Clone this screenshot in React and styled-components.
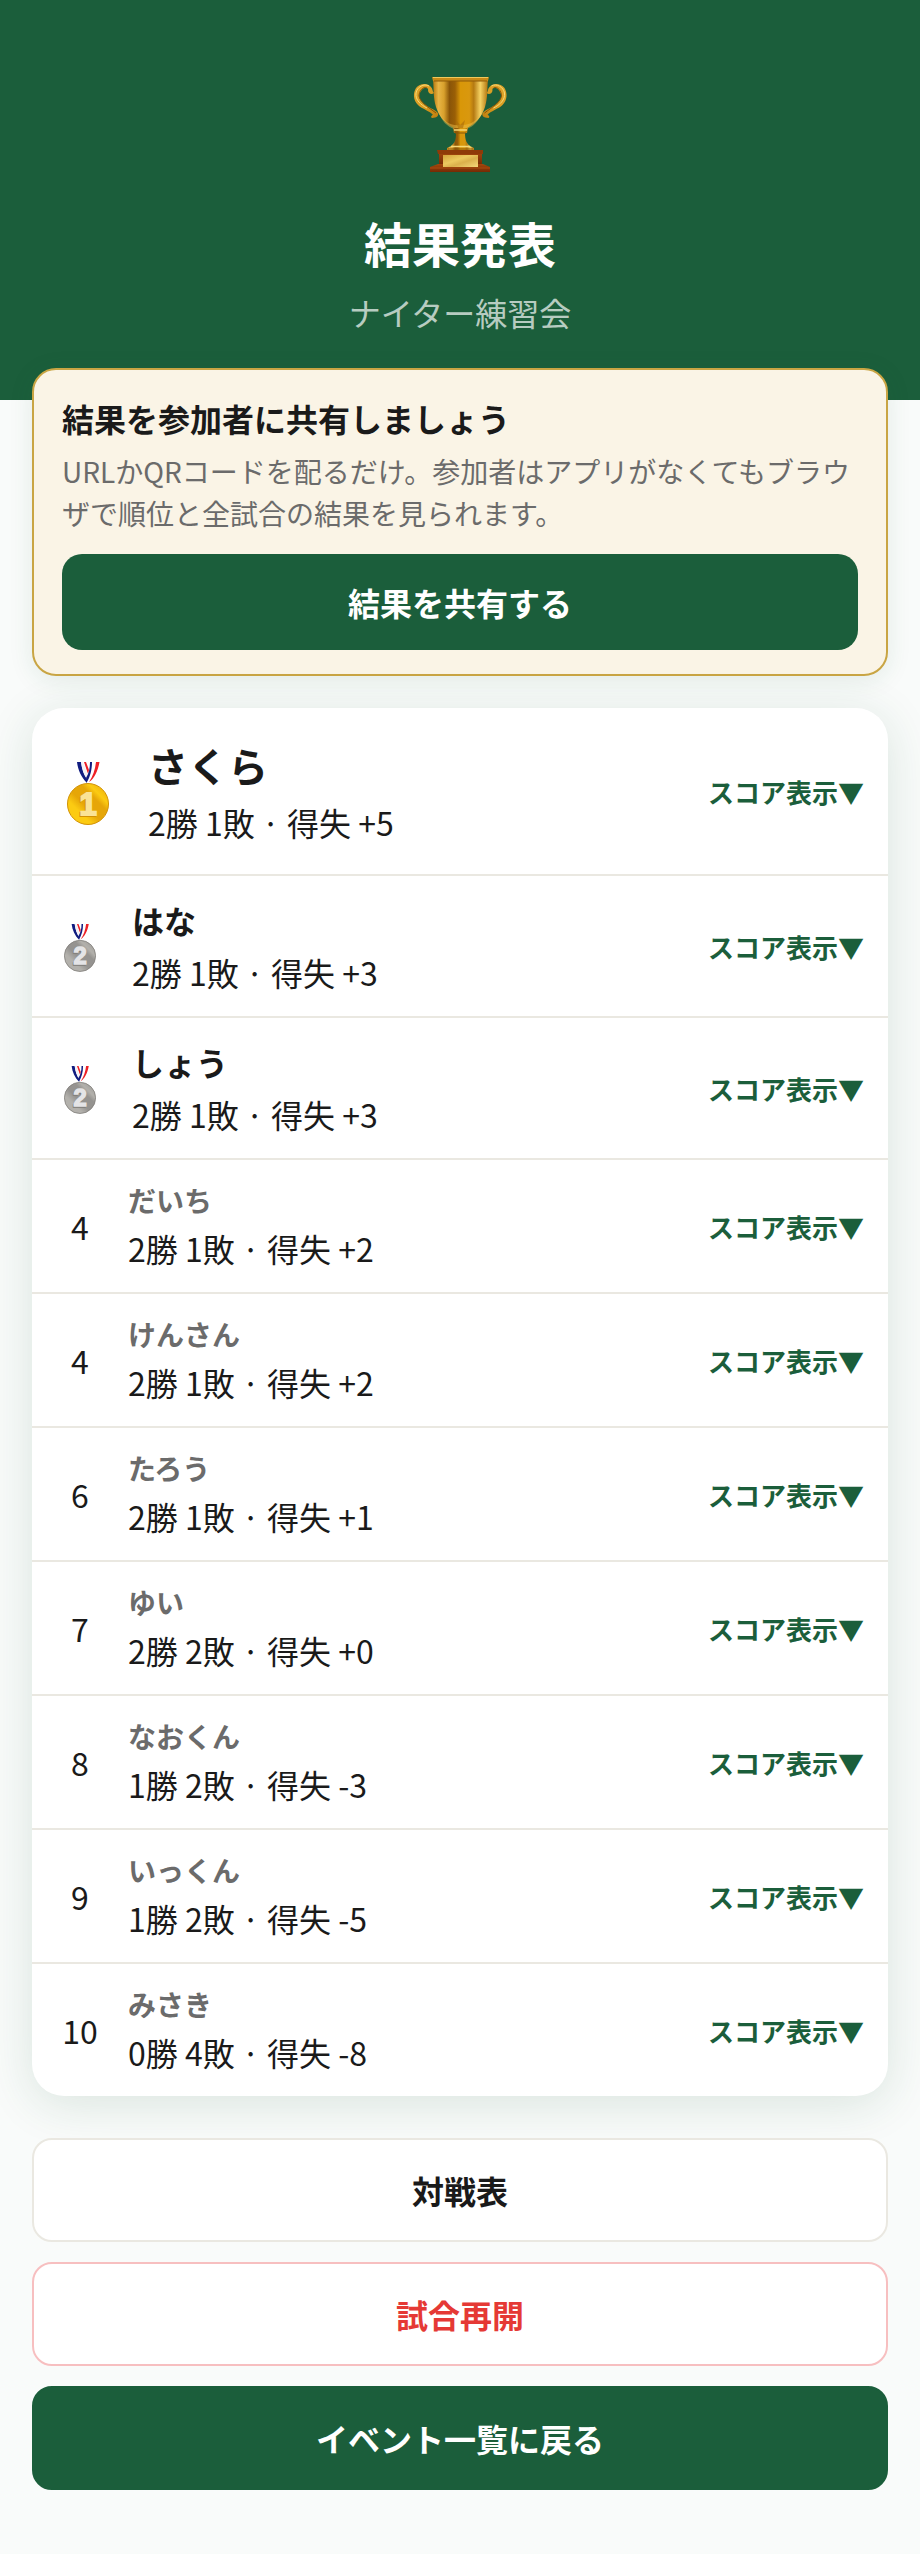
import React from "react"
import styled, { createGlobalStyle, css } from "styled-components"

const colors = {
  green: "#1b5e3b",
  gold: "#c9a544",
  cream: "#faf4e6",
  text: "#1a1a1a",
  muted: "#6b6b6b",
  line: "#eae8e1",
  red: "#e53935",
}

const players = [
  { rank: 1, name: "さくら", win: 2, lose: 1, diff: "+5" },
  { rank: 2, name: "はな", win: 2, lose: 1, diff: "+3" },
  { rank: 2, name: "しょう", win: 2, lose: 1, diff: "+3" },
  { rank: 4, name: "だいち", win: 2, lose: 1, diff: "+2" },
  { rank: 4, name: "けんさん", win: 2, lose: 1, diff: "+2" },
  { rank: 6, name: "たろう", win: 2, lose: 1, diff: "+1" },
  { rank: 7, name: "ゆい", win: 2, lose: 2, diff: "+0" },
  { rank: 8, name: "なおくん", win: 1, lose: 2, diff: "-3" },
  { rank: 9, name: "いっくん", win: 1, lose: 2, diff: "-5" },
  { rank: 10, name: "みさき", win: 0, lose: 4, diff: "-8" },
]

const Trophy = () => (
  <TrophyIcon viewBox="0 0 96 96" aria-hidden="true">
    <defs>
      <linearGradient id="cup" x1="0" x2="1" y1="0" y2="0">
        <stop offset="0" stopColor="#b8780f" />
        <stop offset="0.1" stopColor="#e8b545" />
        <stop offset="0.2" stopColor="#d8a02c" />
        <stop offset="0.3" stopColor="#8a5508" />
        <stop offset="0.4" stopColor="#9a5f06" />
        <stop offset="0.5" stopColor="#d99708" />
        <stop offset="0.66" stopColor="#d9980f" />
        <stop offset="0.74" stopColor="#b57a12" />
        <stop offset="0.86" stopColor="#f5d263" />
        <stop offset="1" stopColor="#b0720c" />
      </linearGradient>
      <linearGradient id="handle" x1="0" x2="1" y1="0" y2="1">
        <stop offset="0" stopColor="#e0a62c" />
        <stop offset="0.5" stopColor="#d99d22" />
        <stop offset="1" stopColor="#c0800f" />
      </linearGradient>
      <linearGradient id="wood" x1="0" x2="0" y1="0" y2="1">
        <stop offset="0" stopColor="#a4470c" />
        <stop offset="1" stopColor="#742a04" />
      </linearGradient>
      <linearGradient id="plaque" x1="0" x2="1" y1="0" y2="1">
        <stop offset="0" stopColor="#d4a23a" />
        <stop offset="0.4" stopColor="#ecc95f" />
        <stop offset="0.6" stopColor="#dbb04c" />
        <stop offset="1" stopColor="#f3d77a" />
      </linearGradient>
      <g id="arm">
        <path
          d="M22 17 C20 19 16 18 16 14 C17 12 12 10 9 15 C6 19 7 23 10 26 C13 30 20 32 25 36 C28 39 25 42 20 42 C18 41 20 39 21 39 C18 35 10 33 6 29 C1 24 1 17 4 12 C8 7 16 7 19 11 C21 13 20 15 22 17 Z"
          fill="url(#handle)"
        />
        <path
          d="M17 10 C12 7 5 11 4 17 C3 24 9 29 15 32"
          fill="none"
          stroke="#f7d976"
          strokeWidth="1"
        />
        <path
          d="M15 12 C11 10 7 15 7 20 C8 26 16 31 24 37"
          fill="none"
          stroke="#8a5406"
          strokeWidth="1"
        />
      </g>
    </defs>
    <use href="#arm" />
    <use href="#arm" transform="translate(96.500 0) scale(-1 1)" />
    <path
      d="M21 4 C22 12 21 21 24 31 C27 41 34 48 42 52 L55 52 C63 48 70 41 73 31 C76 21 75 12 76 4 Z"
      fill="url(#cup)"
    />
    <path
      d="M27 36 C31 45 38 50 48 49 C58 50 66 44 70 36 C67 46 60 51 55 53 L42 53 C36 51 29 45 27 36 Z"
      fill="#f0c44e"
      opacity="0.45"
    />
    <path d="M44 44 L48 49 L53 44 L51 52 L46 52 Z" fill="#a86d0c" opacity="0.6" />
    <path d="M20 1 H77 L76 5 H21 Z" fill="#c88a17" />
    <path d="M21 1.500 H76" stroke="#f0c95c" strokeWidth="1" />
    <path d="M22 5 H75" stroke="#8f5a08" strokeWidth="1" />
    <path
      d="M41 52 H56 L55 57 H53 C53 64 55 68 58 70 L62 72 V75 H35 V72 L39 70 C43 67 44 63 44 57 H42 Z"
      fill="url(#cup)"
    />
    <path d="M42 54 H55 M39 70.500 H58" stroke="#f7d876" strokeWidth="1.500" />
    <path d="M43 57 H54 M36 73 H61" stroke="#8a5606" strokeWidth="1" />
    <path d="M27 76 H70 V89 H27 Z" fill="url(#wood)" />
    <path d="M25 74 H71 V78 H26 Z" fill="#8f3a08" />
    <path d="M26 88 H71 L78 91 V96 H18 V91 Z" fill="url(#wood)" />
    <path d="M18 92 H78" stroke="#a84c10" strokeWidth="1" />
    <rect x="31" y="79" width="35" height="12" fill="url(#plaque)" />
  </TrophyIcon>
)

const medalColors = {
  1: ["#fccb12", "#e6a608", "#d29205", "#fae396"],
  2: ["#b3b1ac", "#959390", "#7f7d79", "#e4e4e6"],
}

const Medal = ({ place }) => {
  const [light, mid, edge, digit] = medalColors[place]
  return (
    <MedalIcon viewBox="0 0 42 68" $place={place} role="img" aria-label={`${place}位`}>
      <defs>
        <linearGradient id={`medal${place}`} x1="0" x2="1" y1="1" y2="0">
          <stop offset="0" stopColor={light} />
          <stop offset="0.3" stopColor={light} />
          <stop offset="0.45" stopColor={mid} />
          <stop offset="0.65" stopColor={mid} />
          <stop offset="0.75" stopColor={light} />
          <stop offset="1" stopColor={mid} />
        </linearGradient>
      </defs>
      <path d="M26 5 H32 C30 14 27 21 22 25 H20 C24 19 25 13 26 5 Z" fill="#fff" />
      <path d="M29 5 H32.500 C31 14 27 22 22 25 C26 19 28 13 29 5 Z" fill="#ee2025" />
      <path d="M17 5 H19 L22 13 L21 17 Z" fill="#ee2025" />
      <path d="M10 5 H14 C15 13 17 18 20 22 V26 C14 20 11 13 10 5 Z" fill="#101c80" />
      <path d="M14 5 H16 L21 18 L20 22 C17 18 15 12 14 5 Z" fill="#f4f2f8" />
      <path d="M23 5 H25 C25 13 23 20 20 25 L19 21 C22 16 23 11 23 5 Z" fill="#101c80" />
      <circle cx="21" cy="47" r="20.500" fill={`url(#medal${place})`} stroke={edge} />
      <MedalDigit x="20" y="59" fill={edge} stroke={edge} aria-hidden="true">
        {place}
      </MedalDigit>
      <MedalDigit x="21" y="58" fill={digit} stroke={digit}>
        {place}
      </MedalDigit>
    </MedalIcon>
  )
}

const PlayerRow = ({ player }) => {
  const { rank, name, win, lose, diff } = player
  return (
    <Row $rank={rank}>
      <Rank $rank={rank}>{rank < 3 ? <Medal place={rank} /> : rank}</Rank>
      <PlayerInfo>
        <PlayerName $rank={rank}>{name}</PlayerName>
        <Stats>
          {win}勝 {lose}敗 · 得失 {diff}
        </Stats>
      </PlayerInfo>
      <ScoreToggle type="button" aria-expanded="false">
        スコア表示▼
      </ScoreToggle>
    </Row>
  )
}

const App = () => {
  return (
    <>
      <GlobalStyle />
      <Hero>
        <Trophy />
        <Title>結果発表</Title>
        <EventName>ナイター練習会</EventName>
      </Hero>
      <Content>
        <ShareCard>
          <ShareTitle>結果を参加者に共有しましょう</ShareTitle>
          <ShareText>
            URLかQRコードを配るだけ。参加者はアプリがなくてもブラウザで順位と全試合の結果を見られます。
          </ShareText>
          <ShareButton type="button">結果を共有する</ShareButton>
        </ShareCard>
        <Ranking>
          {players.map((player) => (
            <PlayerRow key={player.name} player={player} />
          ))}
        </Ranking>
        <Actions>
          <ActionButton type="button">対戦表</ActionButton>
          <ActionButton type="button" $variant="danger">
            試合再開
          </ActionButton>
          <ActionButton type="button" $variant="primary">
            イベント一覧に戻る
          </ActionButton>
        </Actions>
      </Content>
    </>
  )
}

export default App

const GlobalStyle = createGlobalStyle`
  * {
    box-sizing: border-box;
  }

  body {
    margin: 0;
    background: #f9fbfa;
    color: ${colors.text};
    font-family: "Noto Sans CJK JP", sans-serif;
    font-size: 32px;
    line-height: 48px;
  }

  h1, h2, p, ol {
    margin: 0;
    padding: 0;
  }

  button {
    font-family: inherit;
    font-weight: 700;
    cursor: pointer;
  }
`

const Hero = styled.header`
  display: flex;
  flex-direction: column;
  align-items: center;
  padding: 76px 32px 64px;
  background: ${colors.green};
`

const TrophyIcon = styled.svg`
  width: 96px;
  height: 96px;
`

const Title = styled.h1`
  margin-top: 36px;
  font-size: 48px;
  line-height: 68px;
  color: #fff;
`

const EventName = styled.p`
  margin-top: 12px;
  color: rgba(255, 255, 255, 0.7);
`

const Content = styled.main`
  margin-top: -32px;
  padding: 0 32px 64px;
`

const ShareCard = styled.section`
  padding: 24px 28px;
  border: 2px solid ${colors.gold};
  border-radius: 24px;
  background: ${colors.cream};
  box-shadow: 0 4px 24px rgba(27, 94, 59, 0.1);
`

const ShareTitle = styled.h2`
  font-size: 32px;
`

const ShareText = styled.p`
  margin-top: 8px;
  font-size: 28px;
  line-height: 42px;
  color: ${colors.muted};
`

const ShareButton = styled.button`
  width: 100%;
  height: 96px;
  margin-top: 20px;
  border: none;
  border-radius: 20px;
  background: ${colors.green};
  color: #fff;
  font-size: 32px;
`

const Ranking = styled.ol`
  margin-top: 32px;
  border-radius: 32px;
  background: #fff;
  box-shadow: 0 8px 48px rgba(27, 94, 59, 0.14);
  list-style: none;
`

const Row = styled.li`
  display: flex;
  align-items: center;
  padding: ${({ $rank }) => ($rank === 1 ? "28px" : "20px")} 24px
    ${({ $rank }) => ($rank === 1 ? "28px" : "20px")} 28px;

  &:not(:last-child) {
    border-bottom: 2px solid ${colors.line};
  }
`

const Rank = styled.div`
  display: flex;
  flex-shrink: 0;
  justify-content: center;
  width: ${({ $rank }) => ($rank === 1 ? "56px" : "40px")};
  margin-right: ${({ $rank }) => ($rank < 3 ? "32px" : "28px")};
`

const MedalIcon = styled.svg`
  width: ${({ $place }) => ($place === 1 ? "42px" : "32px")};
  height: ${({ $place }) => ($place === 1 ? "68px" : "52px")};
`

const MedalDigit = styled.text`
  font-family: "Liberation Sans", sans-serif;
  font-size: 31px;
  font-weight: 700;
  stroke-width: 2px;
  text-anchor: middle;
`

const PlayerInfo = styled.div`
  flex: 1;
  min-width: 0;
`

const PlayerName = styled.p`
  margin-bottom: 4px;
  font-weight: 700;

  ${({ $rank }) =>
    $rank === 1 &&
    css`
      font-size: 40px;
      line-height: 58px;
    `}

  ${({ $rank }) =>
    $rank > 3 &&
    css`
      font-size: 28px;
      line-height: 40px;
      color: ${colors.muted};
    `}
`

const Stats = styled.p`
  font-size: 32px;
`

const ScoreToggle = styled.button`
  flex-shrink: 0;
  padding: 0;
  border: none;
  background: none;
  color: ${colors.green};
  font-size: 26px;
`

const Actions = styled.div`
  display: grid;
  row-gap: 20px;
  margin-top: 42px;
`

const ActionButton = styled.button`
  height: 104px;
  border: 2px solid ${colors.line};
  border-radius: 20px;
  background: #fff;
  color: ${colors.text};
  font-size: 32px;

  ${({ $variant }) =>
    $variant === "danger" &&
    css`
      border-color: #f7bfc0;
      color: ${colors.red};
    `}

  ${({ $variant }) =>
    $variant === "primary" &&
    css`
      border-color: ${colors.green};
      background: ${colors.green};
      color: #fff;
    `}
`
